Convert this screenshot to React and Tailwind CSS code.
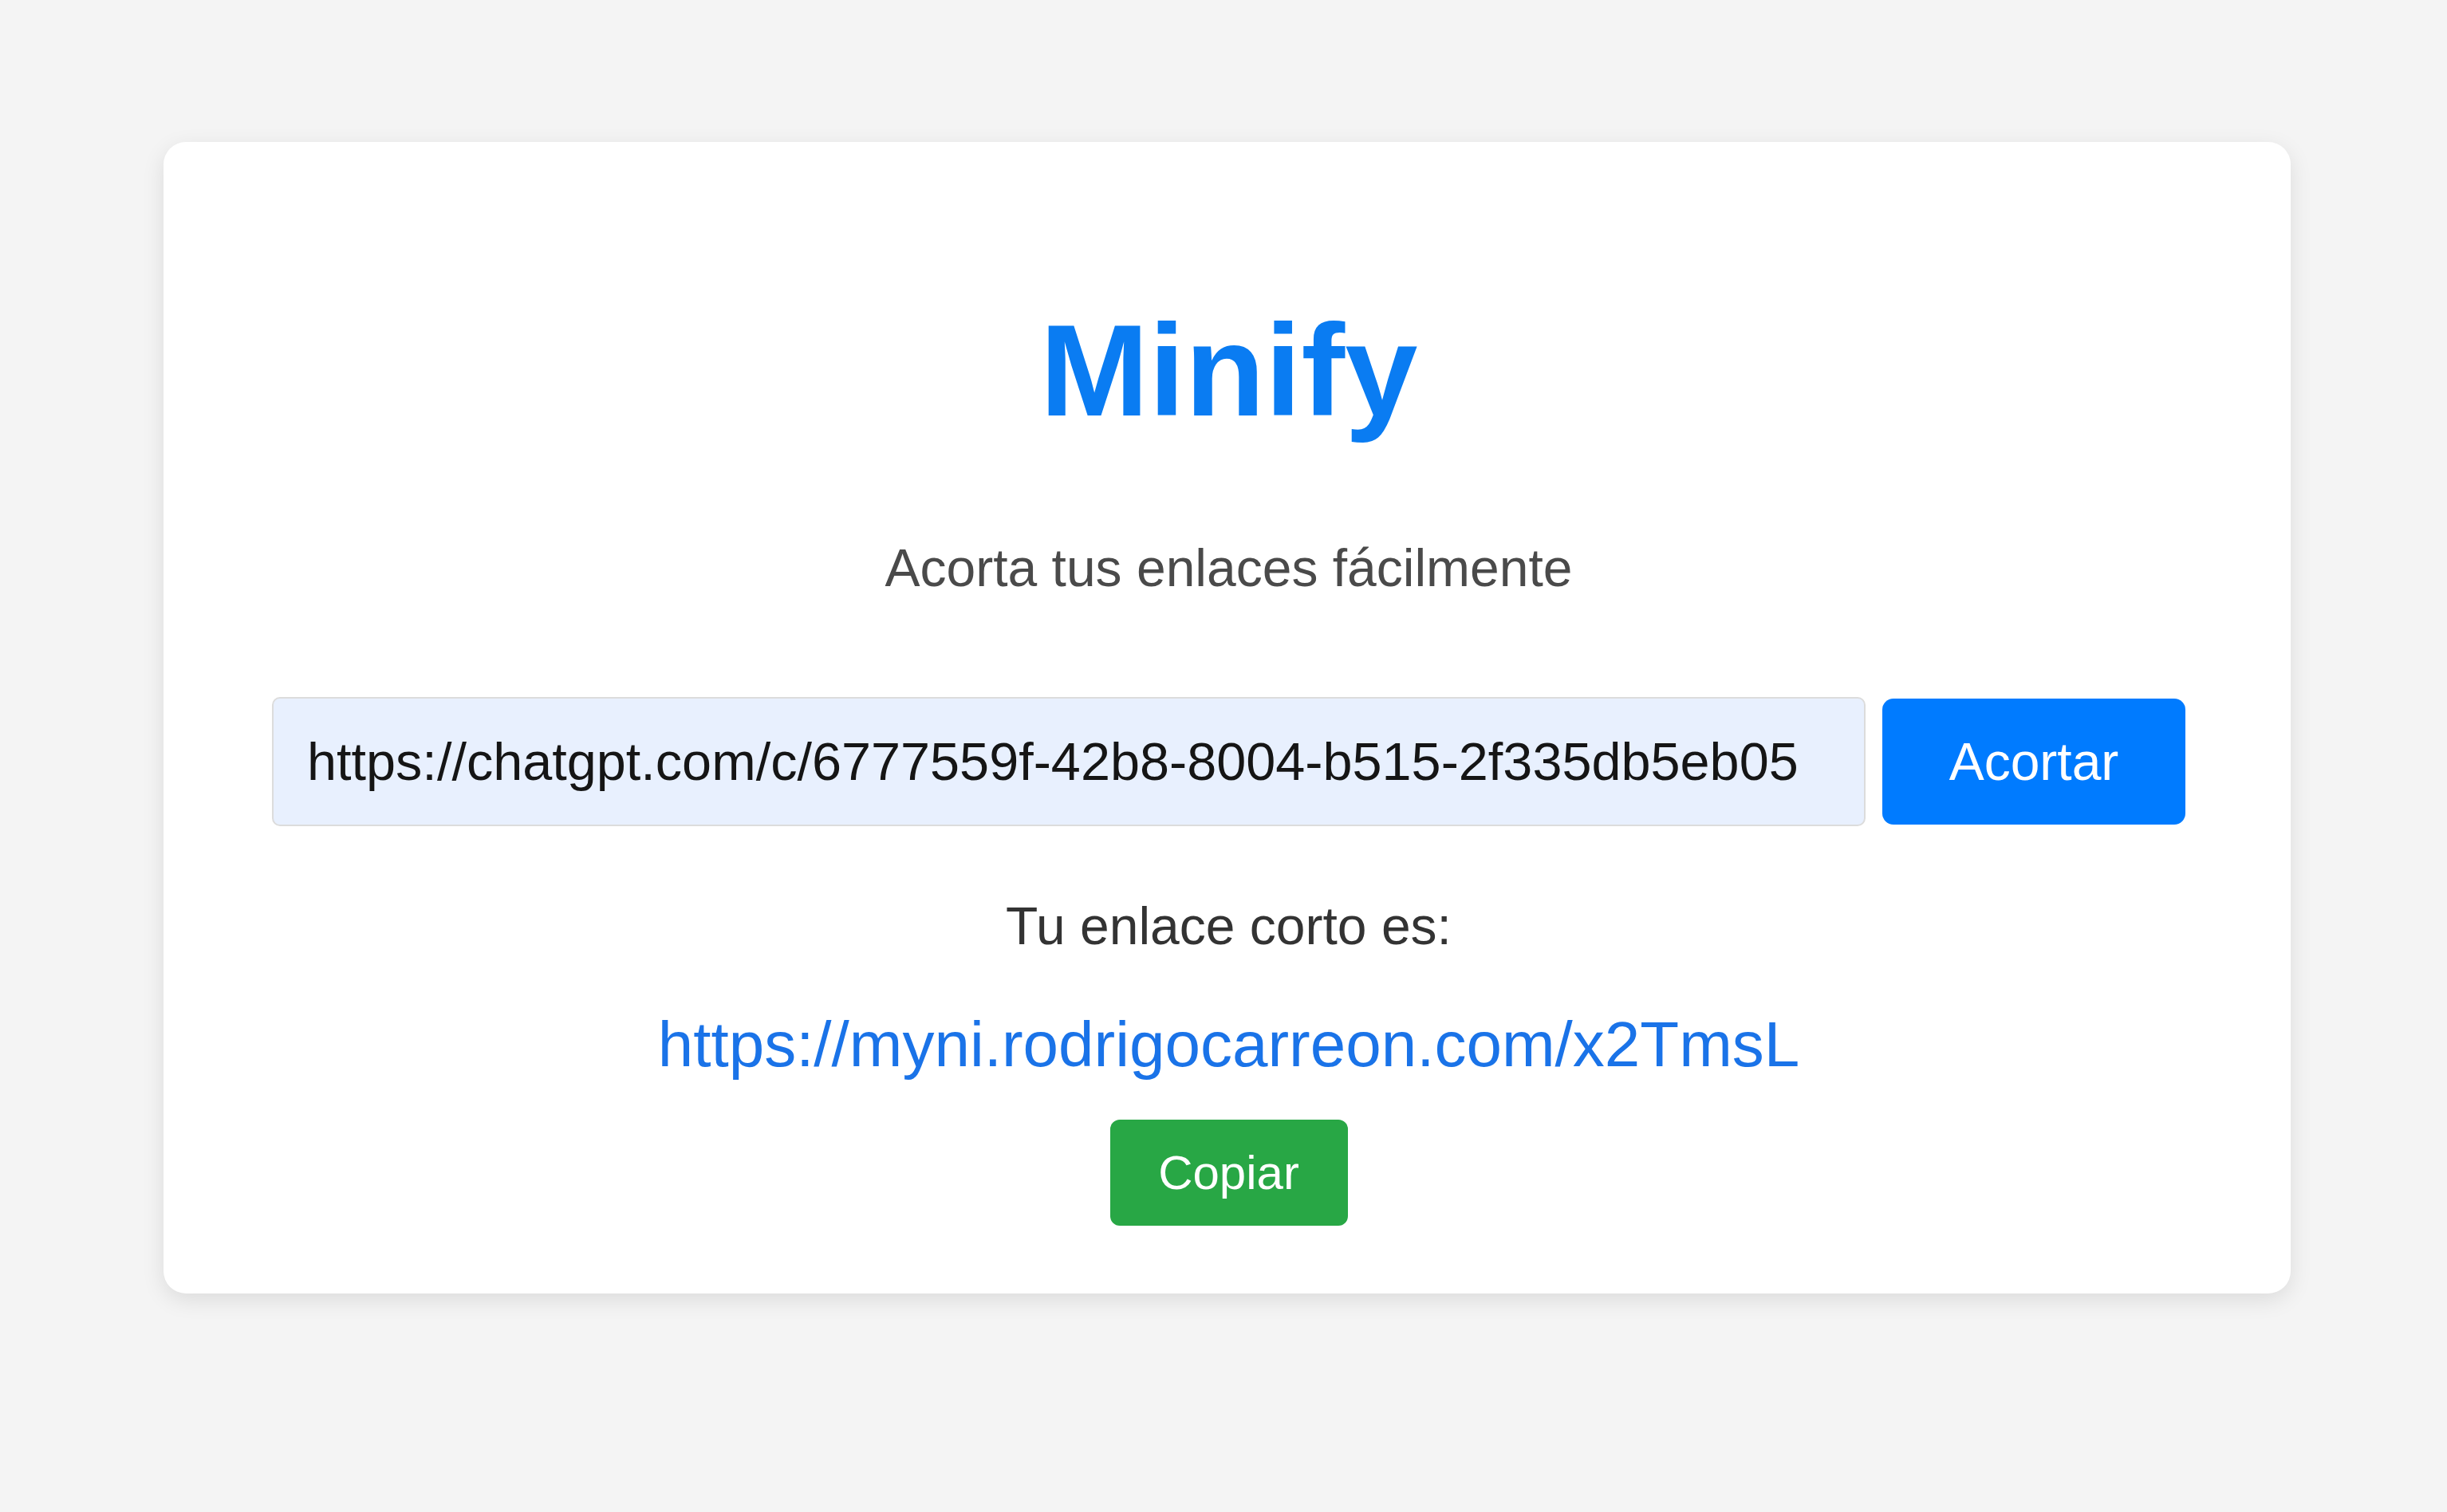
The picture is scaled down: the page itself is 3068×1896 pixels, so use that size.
export default function App() {
  const font = { fontFamily: '"Liberation Sans", Arial, Helvetica, sans-serif' };
  return (
    <div className="min-h-screen w-full bg-[#f4f4f4] pt-[178px]" style={font}>
      <div className="ml-[205px] w-[2667px] rounded-[28px] bg-white pl-[136px] pr-[132px] pt-[205px] pb-[85px] shadow-[0_8px_28px_rgba(0,0,0,0.10)] flex flex-col items-center">
        <h1 className="text-[164px] leading-[164px] font-bold text-[#0a7cf2] m-0">Minify</h1>
        <p className="mt-[132px] text-[66px] leading-[66px] text-[#4a4a4a]">Acorta tus enlaces fácilmente</p>
        <div className="mt-[129px] flex w-full items-center gap-[21px]">
          <input
            type="text"
            readOnly
            value="https://chatgpt.com/c/6777559f-42b8-8004-b515-2f335db5eb05"
            className="h-[162px] flex-1 rounded-[10px] border-2 border-[#dcdcdc] bg-[#e8f0fe] pl-[42px] pr-[20px] text-[66.6px] text-[#151515] outline-none"
            style={font}
          />
          <button className="h-[158px] w-[380px] rounded-[14px] bg-[#007bff] text-[66px] leading-[66px] text-white" style={font}>
            Acortar
          </button>
        </div>
        <p className="mt-[92px] text-[66px] leading-[66px] text-[#333333]">Tu enlace corto es:</p>
        <a href="#" className="mt-[76px] text-[80px] leading-[80px] text-[#1a73e8] no-underline">
          https://myni.rodrigocarreon.com/x2TmsL
        </a>
        <button className="mt-[54px] h-[133px] w-[298px] rounded-[12px] bg-[#28a745] text-[60px] leading-[60px] text-white" style={font}>
          Copiar
        </button>
      </div>
    </div>
  );
}
